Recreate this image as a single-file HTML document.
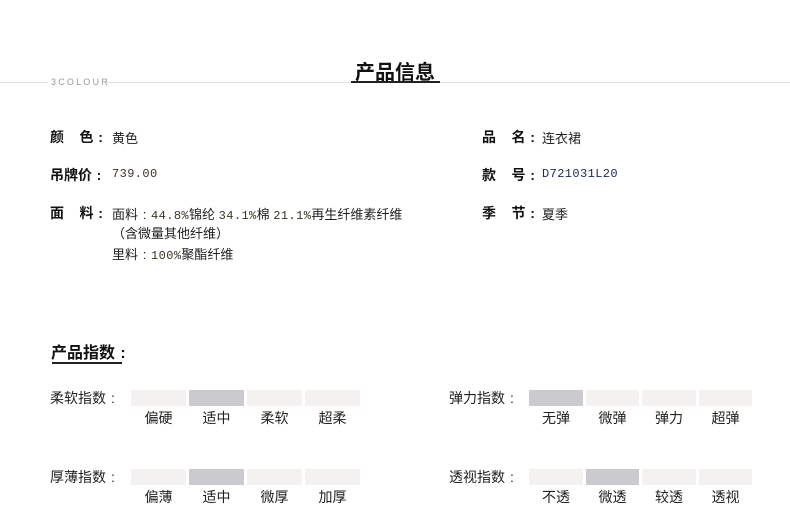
<!DOCTYPE html>
<html><head><meta charset="utf-8"><style>
*{margin:0;padding:0;box-sizing:border-box}
body{width:790px;height:511px;background:#fff;position:relative;overflow:hidden;font-family:"Liberation Sans","Noto Sans CJK SC","WenQuanYi Zen Hei",sans-serif;color:#222}
.a{position:absolute;white-space:nowrap}
.c{display:inline-block;width:1em;text-align:center}
.lbl{font-size:14px;font-weight:bold;color:#111}
.val{font-size:13px;color:#222}
.num{font-family:"Liberation Mono",monospace;font-size:12px;color:#3a3226;letter-spacing:0.4px}
.bar{position:absolute;height:16px;background:#f3f2f1}
.bar.on{background:#cbcacf}
.t{position:absolute;font-size:14px;color:#222;text-align:center;white-space:nowrap}
.il{position:absolute;font-size:14px;color:#222;white-space:nowrap}
</style></head><body>
<div class="a" style="left:0;top:82px;width:790px;height:1px;background:#e0e0e0"></div>
<div class="a" style="left:48px;top:76px;width:58px;height:12px;background:#fff"></div>
<div class="a" style="left:51px;top:77px;font-size:9px;letter-spacing:2.2px;color:#999;font-family:'Liberation Sans',sans-serif">3COLOUR</div>
<div class="a" style="left:355px;top:56px;font-size:20px;font-weight:bold;color:#111">产品信息</div>
<div class="a" style="left:351px;top:81px;width:89px;height:2px;background:#222"></div>

<div class="a lbl" style="left:50px;top:127px">颜&nbsp;&nbsp;&nbsp;&nbsp;色<span class="c">:</span></div>
<div class="a val" style="left:112px;top:128px">黄色</div>
<div class="a lbl" style="left:50px;top:165px">吊牌价<span class="c">:</span></div>
<div class="a val num" style="left:112px;top:167px">739.00</div>
<div class="a lbl" style="left:50px;top:203px">面&nbsp;&nbsp;&nbsp;&nbsp;料<span class="c">:</span></div>
<div class="a val" style="left:112px;top:204px">面料<span class="c">:</span><span class="num">44.8%</span>锦纶 <span class="num">34.1%</span>棉 <span class="num">21.1%</span>再生纤维素纤维</div>
<div class="a val" style="left:112px;top:223px">（含微量其他纤维）</div>
<div class="a val" style="left:112px;top:244px">里料<span class="c">:</span><span class="num">100%</span>聚酯纤维</div>

<div class="a lbl" style="left:482px;top:127px">品&nbsp;&nbsp;&nbsp;&nbsp;名<span class="c">:</span></div>
<div class="a val" style="left:542px;top:128px">连衣裙</div>
<div class="a lbl" style="left:482px;top:165px">款&nbsp;&nbsp;&nbsp;&nbsp;号<span class="c">:</span></div>
<div class="a val num" style="left:542px;top:167px;color:#1a2a55">D721031L20</div>
<div class="a lbl" style="left:482px;top:203px">季&nbsp;&nbsp;&nbsp;&nbsp;节<span class="c">:</span></div>
<div class="a val" style="left:542px;top:204px">夏季</div>

<div class="a" style="left:51px;top:339px;font-size:16px;font-weight:bold;color:#111">产品指数<span class="c">:</span></div>
<div class="a" style="left:52px;top:362px;width:70px;height:2px;background:#222"></div>

<div class="il" style="left:50px;top:388px">柔软指数<span class="c">:</span></div>
<div class="bar" style="left:131px;top:390px;width:55px"></div>
<div class="bar on" style="left:189px;top:390px;width:55px"></div>
<div class="bar" style="left:247px;top:390px;width:55px"></div>
<div class="bar" style="left:305px;top:390px;width:55px"></div>
<div class="t" style="left:131px;top:408px;width:55px">偏硬</div>
<div class="t" style="left:189px;top:408px;width:55px">适中</div>
<div class="t" style="left:247px;top:408px;width:55px">柔软</div>
<div class="t" style="left:305px;top:408px;width:55px">超柔</div>

<div class="il" style="left:50px;top:467px">厚薄指数<span class="c">:</span></div>
<div class="bar" style="left:131px;top:469px;width:55px"></div>
<div class="bar on" style="left:189px;top:469px;width:55px"></div>
<div class="bar" style="left:247px;top:469px;width:55px"></div>
<div class="bar" style="left:305px;top:469px;width:55px"></div>
<div class="t" style="left:131px;top:487px;width:55px">偏薄</div>
<div class="t" style="left:189px;top:487px;width:55px">适中</div>
<div class="t" style="left:247px;top:487px;width:55px">微厚</div>
<div class="t" style="left:305px;top:487px;width:55px">加厚</div>

<div class="il" style="left:449px;top:388px">弹力指数<span class="c">:</span></div>
<div class="bar on" style="left:529px;top:390px;width:54px"></div>
<div class="bar" style="left:586px;top:390px;width:53px"></div>
<div class="bar" style="left:642px;top:390px;width:54px"></div>
<div class="bar" style="left:699px;top:390px;width:53px"></div>
<div class="t" style="left:529px;top:408px;width:54px">无弹</div>
<div class="t" style="left:586px;top:408px;width:53px">微弹</div>
<div class="t" style="left:642px;top:408px;width:54px">弹力</div>
<div class="t" style="left:699px;top:408px;width:53px">超弹</div>

<div class="il" style="left:449px;top:467px">透视指数<span class="c">:</span></div>
<div class="bar" style="left:529px;top:469px;width:54px"></div>
<div class="bar on" style="left:586px;top:469px;width:53px"></div>
<div class="bar" style="left:642px;top:469px;width:54px"></div>
<div class="bar" style="left:699px;top:469px;width:53px"></div>
<div class="t" style="left:529px;top:487px;width:54px">不透</div>
<div class="t" style="left:586px;top:487px;width:53px">微透</div>
<div class="t" style="left:642px;top:487px;width:54px">较透</div>
<div class="t" style="left:699px;top:487px;width:53px">透视</div>
</body></html>
